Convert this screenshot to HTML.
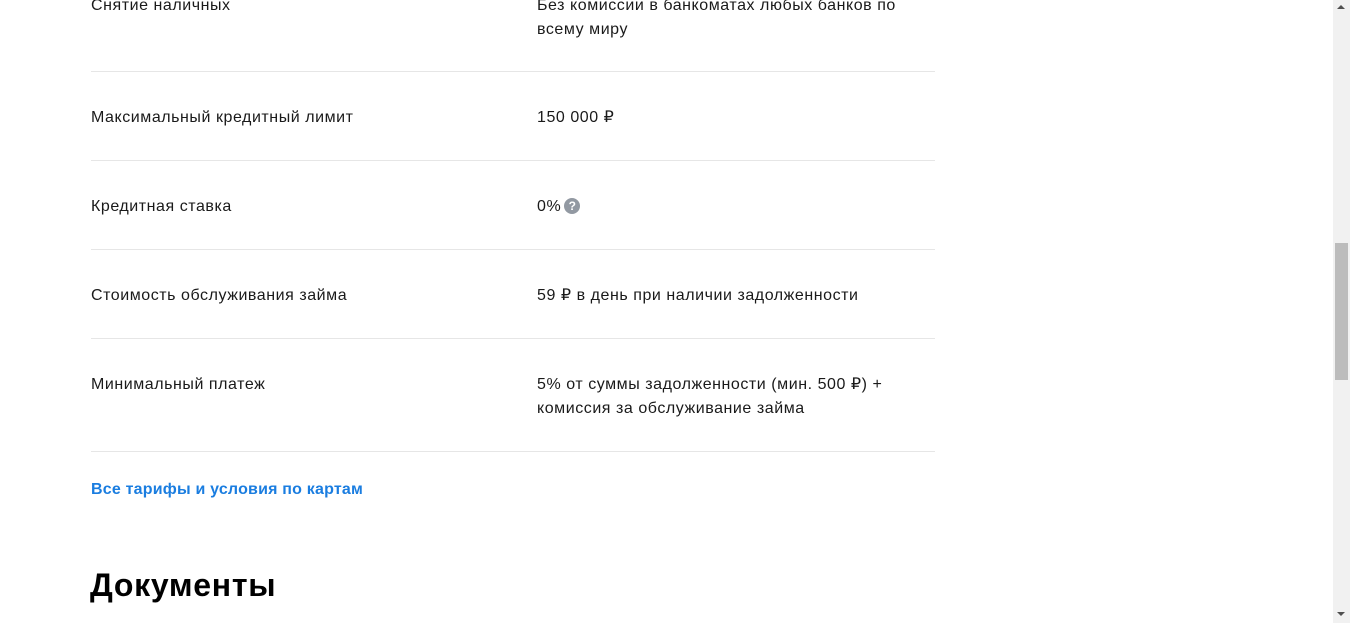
<!DOCTYPE html>
<html><head><meta charset="utf-8"><style>
body{margin:0;width:1350px;height:623px;overflow:hidden;background:#fff;font-family:"Liberation Sans",sans-serif;color:#1a1a1a;position:relative}
.t{position:absolute;font-size:16px;line-height:24px;white-space:nowrap;letter-spacing:0.55px}
.l{position:absolute;left:91px;width:844px;height:1px;background:#e6e6e6}
.q{display:inline-block;width:16px;height:16px;border-radius:50%;background:#9299a2;color:#fff;font-size:12px;font-weight:bold;line-height:16px;text-align:center;vertical-align:1px;margin-left:3px;letter-spacing:0}
</style></head><body>
<div class="t" style="left:91px;top:-6px">Снятие наличных</div>
<div class="t" style="left:537px;top:-6px">Без комиссии в банкоматах любых банков по<br>всему миру</div>
<div class="l" style="top:71px"></div>
<div class="t" style="left:91px;top:106px">Максимальный кредитный лимит</div>
<div class="t" style="left:537px;top:106px">150 000 ₽</div>
<div class="l" style="top:160px"></div>
<div class="t" style="left:91px;top:195px">Кредитная ставка</div>
<div class="t" style="left:537px;top:195px">0%<span class="q">?</span></div>
<div class="l" style="top:249px"></div>
<div class="t" style="left:91px;top:284px">Стоимость обслуживания займа</div>
<div class="t" style="left:537px;top:284px">59 ₽ в день при наличии задолженности</div>
<div class="l" style="top:338px"></div>
<div class="t" style="left:91px;top:373px">Минимальный платеж</div>
<div class="t" style="left:537px;top:373px">5% от суммы задолженности (мин. 500 ₽) +<br>комиссия за обслуживание займа</div>
<div class="l" style="top:451px"></div>
<div class="t" style="left:91px;top:478px;color:#1a7de0;font-weight:bold;letter-spacing:0.2px">Все тарифы и условия по картам</div>
<div class="t" style="left:90px;top:566px;font-size:32px;line-height:38px;font-weight:bold;color:#000;letter-spacing:0.7px">Документы</div>
<div style="position:absolute;left:1333px;top:0;width:17px;height:623px;background:#f1f1f1"></div>
<div style="position:absolute;left:1335px;top:243px;width:13px;height:137px;background:#bcbcbc"></div>
<div style="position:absolute;left:1337px;top:5px;width:0;height:0;border-left:4px solid transparent;border-right:4px solid transparent;border-bottom:4px solid #505050"></div>
<div style="position:absolute;left:1337px;top:612px;width:0;height:0;border-left:4px solid transparent;border-right:4px solid transparent;border-top:4px solid #505050"></div>
</body></html>
